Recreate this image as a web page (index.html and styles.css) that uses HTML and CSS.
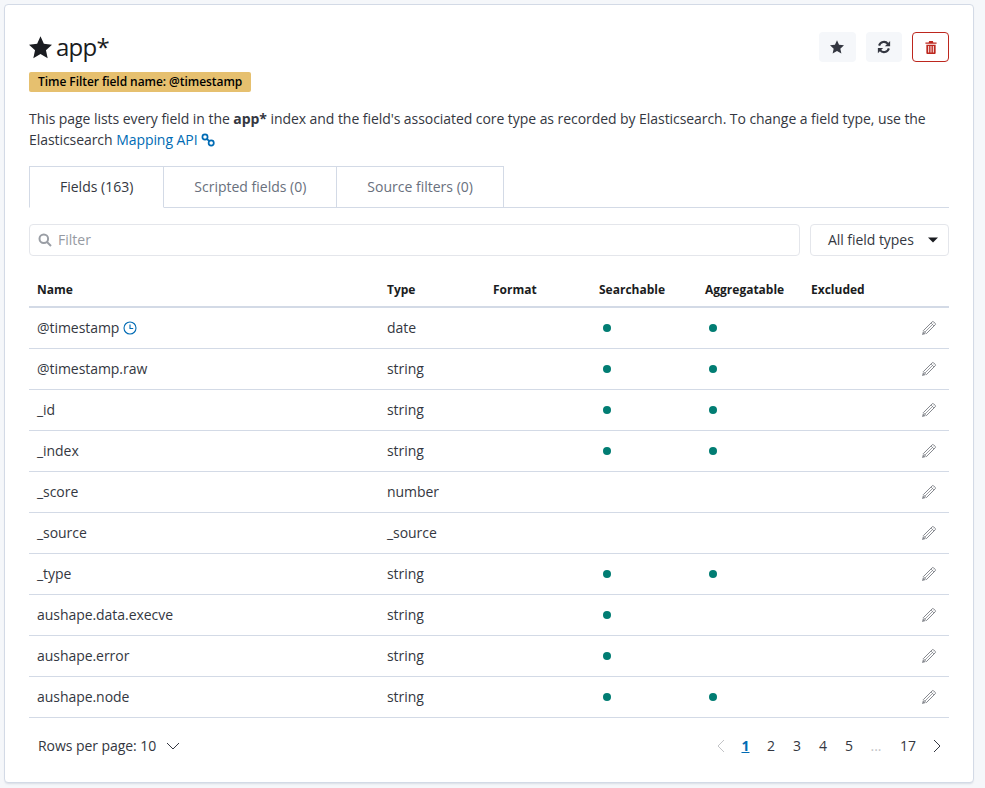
FILE: index.html
```html
<!DOCTYPE html>
<html>
<head>
    <meta charset="utf-8" />
    <title>app*</title>
    <link rel="stylesheet" href="styles.css">
</head>
<body>
    <svg class="defs" width="0" height="0">
        <symbol id="pencil" viewBox="0 0 16 16">
            <path fill="none" stroke="currentColor" stroke-width="1" stroke-linejoin="round" d="M2.300 10.700L11.200 1.800a1 1 0 0 1 1.400 0l1.600 1.600a1 1 0 0 1 0 1.400L5.300 13.700z"/>
            <path fill="none" stroke="currentColor" stroke-width=".8" d="M3.800 12.200L12.300 3.700M10 3l3 3"/>
            <path fill="currentColor" d="M1 15l.9-3.600 2.700 2.700z"/>
        </symbol>
    </svg>
    <div class="card">
        <div class="head">
            <div>
                <h1 class="title">
                    <svg class="title-star" viewBox="0 0 24 24"><path fill="currentColor" d="M12 .3l3.500 7.800 8.500 1-6.300 5.700 1.800 8.400L12 18.900l-7.500 4.300 1.800-8.400L0 9.100l8.500-1z"/></svg>
                    <span class="title-text">app*</span>
                </h1>
                <span class="badge">Time Filter field name: @timestamp</span>
            </div>
            <div class="actions">
                <button class="icon-btn">
                    <svg width="14" height="14" viewBox="0 0 24 24"><path fill="currentColor" d="M12 .5l3.500 7.700 8.500 1-6.300 5.700 1.800 8.400L12 19l-7.500 4.300 1.800-8.400L0 9.200l8.500-1z"/></svg>
                </button>
                <button class="icon-btn">
                    <svg width="14" height="14" viewBox="0 0 16 16"><path fill="none" stroke="currentColor" stroke-width="2.400" d="M2.400 6.400A5.800 5.800 0 0 1 12.500 4.400M13.600 9.600A5.800 5.800 0 0 1 3.500 11.600"/><path fill="currentColor" d="M15 1v6H9zM1 15V9h6z"/></svg>
                </button>
                <button class="icon-btn danger">
                    <svg width="12" height="13" viewBox="0 0 12 14"><path fill="currentColor" d="M4 0h4l.5 1.500H12V3H0V1.500h3.500zM1 4h10v9a1 1 0 0 1-1 1H2a1 1 0 0 1-1-1zM3 5.500V12.500h1V5.500zm2.500 0V12.500h1V5.500zm2.500 0V12.500h1V5.500z"/></svg>
                </button>
            </div>
        </div>

        <p class="intro">
            This page lists every field in the <b>app*</b> index and the field's associated core type as recorded by Elasticsearch. To change a field type, use the<br>
            Elasticsearch <a href="#">Mapping API
            <svg class="link-icon" width="14" height="14" viewBox="0 0 14 14"><g fill="none" stroke="currentColor" stroke-width="1.700"><circle cx="4" cy="4" r="2.600"/><circle cx="10.200" cy="10" r="2.600"/><path d="M6 6l2.300 2.100"/></g></svg></a>
        </p>

        <div class="tabs">
            <div class="tab selected">Fields (163)</div>
            <div class="tab">Scripted fields (0)</div>
            <div class="tab">Source filters (0)</div>
        </div>

        <div class="filters">
            <div class="search">
                <svg width="14" height="14" viewBox="0 0 14 14"><g fill="none" stroke="currentColor" stroke-width="2"><circle cx="5.800" cy="5.800" r="4.300"/><path d="M9 9l4 4"/></g></svg>
                <span>Filter</span>
            </div>
            <div class="select">
                All field types
                <svg width="10" height="6" viewBox="0 0 10 6"><path fill="currentColor" d="M0 .5h10L5 5.500z"/></svg>
            </div>
        </div>

        <table class="fields">
            <thead>
                <tr>
                    <th class="col-name">Name</th>
                    <th class="col">Type</th>
                    <th class="col">Format</th>
                    <th class="col">Searchable</th>
                    <th class="col">Aggregatable</th>
                    <th class="col">Excluded</th>
                    <th class="col-edit"></th>
                </tr>
            </thead>
            <tbody>
                <tr>
                    <td>@timestamp <svg class="clock" width="14" height="14" viewBox="0 0 14 14"><g fill="none" stroke="currentColor" stroke-width="1.100"><circle cx="7" cy="7" r="6"/><path d="M7 3.500V7.500H10.200"/></g></svg></td>
                    <td>date</td><td></td><td><i class="dot"></i></td><td><i class="dot"></i></td><td></td>
                    <td class="edit"><svg width="16" height="16"><use href="#pencil"/></svg></td>
                </tr>
                <tr>
                    <td>@timestamp.raw</td>
                    <td>string</td><td></td><td><i class="dot"></i></td><td><i class="dot"></i></td><td></td>
                    <td class="edit"><svg width="16" height="16"><use href="#pencil"/></svg></td>
                </tr>
                <tr>
                    <td>_id</td>
                    <td>string</td><td></td><td><i class="dot"></i></td><td><i class="dot"></i></td><td></td>
                    <td class="edit"><svg width="16" height="16"><use href="#pencil"/></svg></td>
                </tr>
                <tr>
                    <td>_index</td>
                    <td>string</td><td></td><td><i class="dot"></i></td><td><i class="dot"></i></td><td></td>
                    <td class="edit"><svg width="16" height="16"><use href="#pencil"/></svg></td>
                </tr>
                <tr>
                    <td>_score</td>
                    <td>number</td><td></td><td></td><td></td><td></td>
                    <td class="edit"><svg width="16" height="16"><use href="#pencil"/></svg></td>
                </tr>
                <tr>
                    <td>_source</td>
                    <td>_source</td><td></td><td></td><td></td><td></td>
                    <td class="edit"><svg width="16" height="16"><use href="#pencil"/></svg></td>
                </tr>
                <tr>
                    <td>_type</td>
                    <td>string</td><td></td><td><i class="dot"></i></td><td><i class="dot"></i></td><td></td>
                    <td class="edit"><svg width="16" height="16"><use href="#pencil"/></svg></td>
                </tr>
                <tr>
                    <td>aushape.data.execve</td>
                    <td>string</td><td></td><td><i class="dot"></i></td><td></td><td></td>
                    <td class="edit"><svg width="16" height="16"><use href="#pencil"/></svg></td>
                </tr>
                <tr>
                    <td>aushape.error</td>
                    <td>string</td><td></td><td><i class="dot"></i></td><td></td><td></td>
                    <td class="edit"><svg width="16" height="16"><use href="#pencil"/></svg></td>
                </tr>
                <tr>
                    <td>aushape.node</td>
                    <td>string</td><td></td><td><i class="dot"></i></td><td><i class="dot"></i></td><td></td>
                    <td class="edit"><svg width="16" height="16"><use href="#pencil"/></svg></td>
                </tr>
            </tbody>
        </table>

        <div class="footer">
            <div class="rows">
                Rows per page: 10
                <svg width="14" height="8" viewBox="0 0 14 8"><path fill="none" stroke="currentColor" d="M1 1l6 6 6-6"/></svg>
            </div>
            <div class="pager">
                <svg class="arrow off" width="8" height="14" viewBox="0 0 8 14"><path fill="none" stroke="currentColor" d="M7 1L1 7l6 6"/></svg>
                <a class="page current">1</a>
                <a class="page">2</a>
                <a class="page">3</a>
                <a class="page">4</a>
                <a class="page">5</a>
                <span class="page gap">...</span>
                <a class="page last">17</a>
                <svg class="arrow" width="8" height="14" viewBox="0 0 8 14"><path fill="none" stroke="currentColor" d="M1 1l6 6-6 6"/></svg>
            </div>
        </div>
    </div>
</body>
</html>
```

FILE: styles.css
```css
*
{
    box-sizing: border-box;
}

body
{
    margin: 0;
    padding: 4px 11px 5px 4px;
    background-color: #f5f7fa;
    color: #343741;
    font: 14px/20px 'Open Sans', sans-serif;
}

.defs
{
    position: absolute;
}

.card
{
    width: 970px;
    height: 779px;
    padding: 24px;
    background-color: #fff;
    border: 1px solid #d3dae6;
    border-radius: 4px;
    box-shadow: 0 2px 2px -1px rgba(152, 162, 179, 0.3);
}

.head
{
    display: flex;
    justify-content: space-between;
    align-items: flex-start;
}

.title
{
    display: flex;
    align-items: center;
    gap: 4px;
    margin: 0 0 7px;
    height: 36px;
    color: #1a1c21;
    font-size: 24px;
    font-weight: 400;
    line-height: 36px;
}

.title-text
{
    letter-spacing: -0.72px;
}

.title-star
{
    width: 23px;
    height: 23px;
}

.badge
{
    display: block;
    width: fit-content;
    padding: 0 9px;
    height: 20px;
    background-color: #e6c06f;
    border-radius: 2px;
    color: #000;
    font-size: 12px;
    font-weight: 600;
    letter-spacing: -0.06px;
    line-height: 20px;
}

.actions
{
    display: flex;
    gap: 10px;
    margin-top: 3px;
}

.icon-btn
{
    display: flex;
    align-items: center;
    justify-content: center;
    width: 36.67px;
    height: 30px;
    padding: 0;
    background-color: #f5f7fa;
    border: 0;
    border-radius: 4px;
    color: #343741;
}

.icon-btn.danger
{
    background-color: #fff;
    border: 1px solid #bd271e;
    color: #bd271e;
}

.intro
{
    margin: 16px 0 16px;
    letter-spacing: -0.06px;
    line-height: 21px;
}

.intro a
{
    color: #006bb4;
    text-decoration: none;
}

.link-icon
{
    vertical-align: -2px;
}

.tabs
{
    display: flex;
    height: 42px;
    border-bottom: 1px solid #d3dae6;
}

.tab
{
    padding: 0 30px;
    height: 42px;
    background-color: #fff;
    border: 1px solid #d3dae6;
    border-left: 0;
    color: #69707d;
    line-height: 40px;
}

.tab.selected
{
    border-left: 1px solid #d3dae6;
    border-bottom-color: #fff;
    color: #343741;
}

.filters
{
    display: flex;
    gap: 10px;
    margin-top: 16px;
}

.search
{
    display: flex;
    align-items: center;
    gap: 6px;
    flex: 1;
    height: 32px;
    padding-left: 8px;
    border: 1px solid #e4e6eb;
    border-radius: 4px;
    color: #9a9ea5;
}

.search span
{
    color: #969aa2;
}

.select
{
    display: flex;
    align-items: center;
    justify-content: space-between;
    width: 139px;
    height: 32px;
    padding: 0 10px 0 17px;
    border: 1px solid #e4e6eb;
    border-radius: 4px;
    letter-spacing: -0.05px;
}

.select svg
{
    color: #1a1c21;
}

.fields
{
    width: 920px;
    margin-top: 16px;
    border-collapse: collapse;
    table-layout: fixed;
}

.fields th
{
    height: 35px;
    padding: 2px 8px 0;
    border-bottom: 2px solid #d3dae6;
    color: #1a1c21;
    font-size: 12px;
    font-weight: 700;
    text-align: left;
}

.col-name
{
    width: 350px;
}

.col
{
    width: 106px;
}

.col-edit
{
    width: 40px;
}

.fields td
{
    height: 41px;
    padding: 0 8px;
    border-bottom: 1px solid #d3dae6;
    letter-spacing: -0.05px;
}

.clock
{
    color: #006bb4;
    vertical-align: -2px;
}

.dot
{
    display: block;
    width: 8px;
    height: 8px;
    margin-left: 4px;
    background-color: #017d73;
    border-radius: 50%;
}

.fields td.edit
{
    padding: 0 12px;
    color: #85888e;
}

.edit svg
{
    display: block;
}

.footer
{
    display: flex;
    justify-content: space-between;
    align-items: center;
    height: 56px;
    padding: 0 8px 0 9px;
}

.rows
{
    display: flex;
    align-items: center;
    gap: 9px;
    letter-spacing: -0.06px;
}

.rows svg
{
    margin-left: 1px;
}

.pager
{
    display: flex;
    align-items: center;
}

.page
{
    width: 26px;
    text-align: center;
}

.page.current
{
    width: 25px;
    color: #006bb4;
    font-weight: 700;
    text-decoration: underline;
}

.page.gap
{
    width: 28px;
    color: #c2c3c6;
}

.page.last
{
    width: 36px;
}

.arrow
{
    margin: 0 0 0 7px;
}

.arrow.off
{
    margin: 0 8px 0 0;
    color: #c2c3c6;
}
```
